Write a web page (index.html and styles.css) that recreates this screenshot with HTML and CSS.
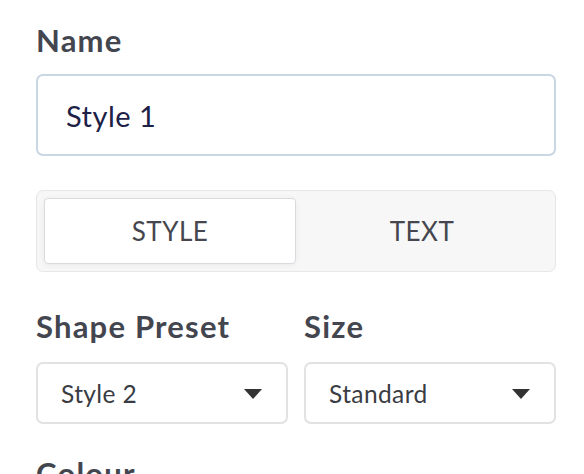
FILE: index.html
```
<!DOCTYPE html>
<html>
<head>
<meta charset="utf-8">
<link rel="stylesheet" href="styles.css">
</head>
<body>
<div class="panel">
  <div class="field">
    <label class="label">Name</label>
    <div class="input">Style 1</div>
  </div>
  <div class="tabs">
    <div class="tab active">STYLE</div>
    <div class="tab">TEXT</div>
  </div>
  <div class="row">
    <div class="col">
      <label class="label">Shape Preset</label>
      <div class="select"><span>Style 2</span><svg class="caret" width="18" height="10" viewBox="0 0 18 10"><path d="M0 0H18L9 10Z" fill="#333"/></svg></div>
    </div>
    <div class="col">
      <label class="label">Size</label>
      <div class="select"><span>Standard</span><svg class="caret" width="18" height="10" viewBox="0 0 18 10"><path d="M0 0H18L9 10Z" fill="#333"/></svg></div>
    </div>
  </div>
  <div class="field">
    <label class="label">Colour</label>
  </div>
</div>
</body>
</html>
```
FILE: styles.css
```
html, body { margin: 0; padding: 0; background: #fff; }
body { font-family: "Lato", "Noto Sans", sans-serif; overflow: hidden; height: 474px; }
.panel { padding: 23px 28px 0 36px; display: flex; flex-direction: column; }
.label { display: block; font-size: 31px; font-weight: 700; color: #43464f; line-height: 34px; letter-spacing: 1.2px; margin-bottom: 17px; white-space: nowrap; }
.input { height: 78px; border: 2px solid #c9d6e4; border-radius: 7px; padding-left: 28px; display: flex; align-items: center; font-size: 29px; letter-spacing: 0.5px; color: #1d2146; }
.tabs { margin-top: 34px; height: 66px; padding: 7px; background: #f7f7f8; border: 1px solid #e6e7ea; border-radius: 7px; display: grid; grid-template-columns: 1fr 1fr; }
.tab { display: flex; align-items: center; justify-content: center; font-size: 26px; color: #45464e; letter-spacing: 0.5px; border-radius: 4px; }
.tab.active { background: #fff; border: 1px solid #d9dadd; box-shadow: 0 1px 6px rgba(0,0,0,0.06); }
.row { margin-top: 37px; display: grid; grid-template-columns: 1fr 1fr; gap: 16px; }
.row .label { margin-bottom: 19px; }
.select { height: 58px; border: 2px solid #e2e2e4; border-radius: 7px; display: flex; align-items: center; justify-content: space-between; padding: 0 24px 0 23px; font-size: 24.5px; letter-spacing: 0.4px; color: #3a3c44; }
.caret { display: block; margin-top: 1px; }
.row + .field { margin-top: 32px; }
```
